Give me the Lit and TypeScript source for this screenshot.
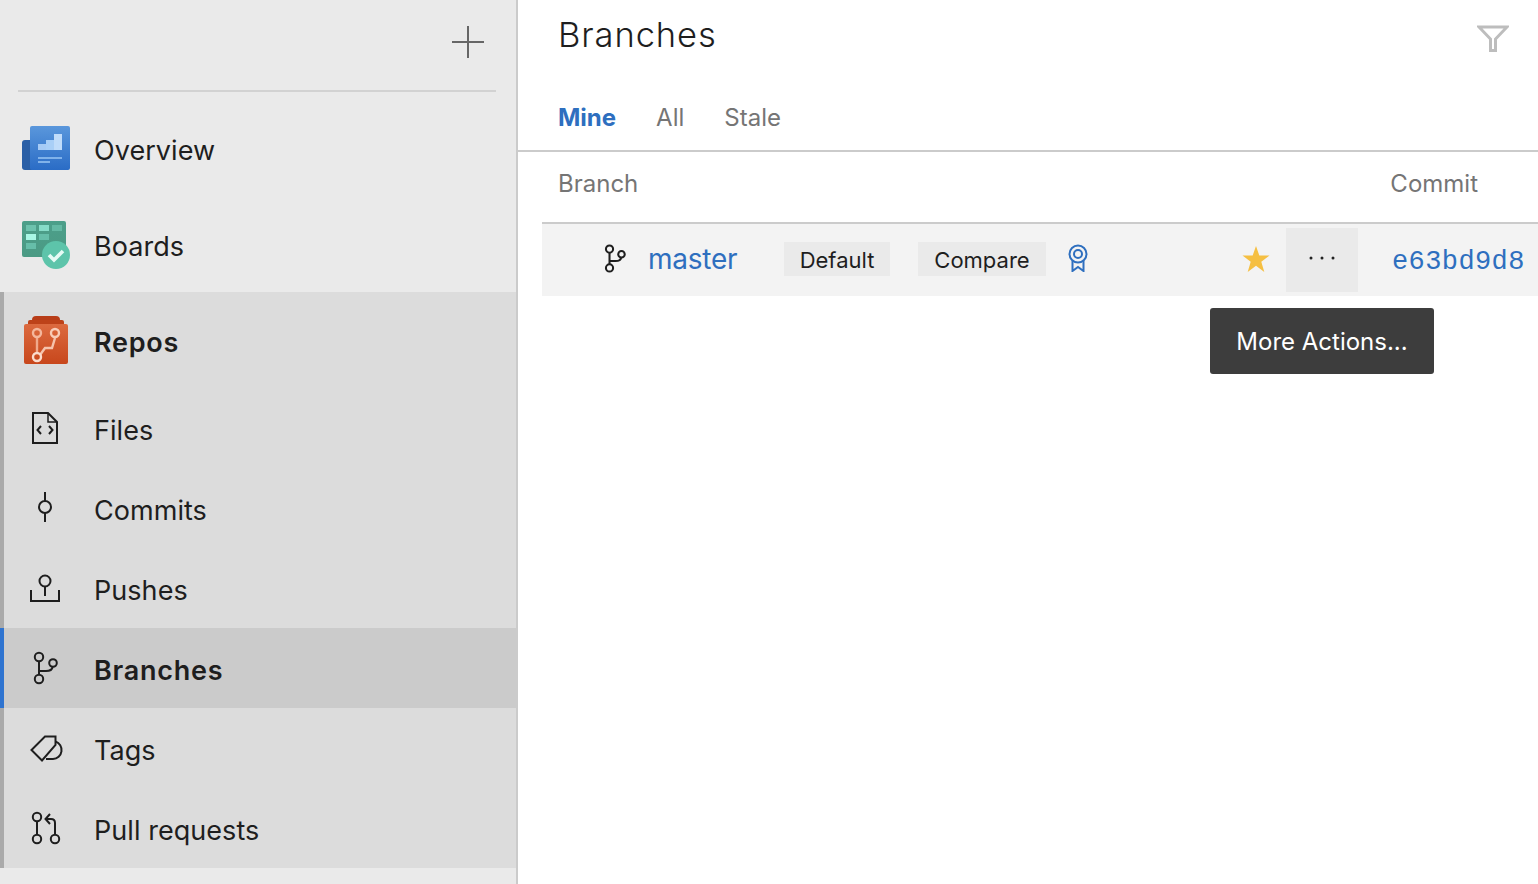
import { LitElement, html, css, svg } from "lit";
import { customElement } from "lit/decorators.js";

const branchIcon = svg`<g fill="none" stroke="currentColor" stroke-width="2"><circle cx="17" cy="13" r="4.2"/><circle cx="17" cy="35" r="4.2"/><circle cx="31" cy="19" r="3.8"/><path d="M17 17.5V30.5M17 27H24Q30 27 30.6 23"/></g>`;

const icons: Record<string, unknown> = {
  overview: html`<svg viewBox="0 0 48 48" width="48" height="48">
    <defs><linearGradient id="o" x1="0" y1="0" x2="0" y2="1"><stop offset="0" stop-color="#5a97dc"/><stop offset="1" stop-color="#2a6cc6"/></linearGradient></defs>
    <rect x="0" y="14" width="14" height="30" rx="3" fill="#2a5fa6"/>
    <rect x="8" y="0" width="40" height="44" rx="2" fill="url(#o)"/>
    <rect x="16" y="18" width="8" height="6" fill="#a6cbf5"/><rect x="24" y="14" width="8" height="10" fill="#a9cff7"/><rect x="32" y="8" width="8" height="16" fill="#c0dcfa"/>
    <rect x="16" y="31" width="24" height="2" fill="#80b2ea"/><rect x="16" y="35" width="12" height="2" fill="#80b2ea"/>
  </svg>`,
  boards: html`<svg viewBox="0 0 48 48" width="48" height="48">
    <defs><linearGradient id="b" x1="0" y1="0" x2="0" y2="1"><stop offset="0" stop-color="#4c9f8a"/><stop offset="1" stop-color="#4b9a84"/></linearGradient></defs>
    <rect x="0" y="0" width="44" height="36" rx="2" fill="url(#b)"/>
    <rect x="4" y="4" width="10" height="6" fill="#6cc2ad"/><rect x="17" y="4" width="10" height="6" fill="#86dcc8"/><rect x="30" y="4" width="10" height="6" fill="#64b9a4"/>
    <rect x="4" y="13" width="10" height="6" fill="#a9f7e5"/><rect x="17" y="13" width="10" height="6" fill="#66bea9"/>
    <rect x="4" y="22" width="10" height="6" fill="#66bea9"/>
    <circle cx="34" cy="34" r="14" fill="#5dc4aa"/>
    <path d="M27 34L32 39L41 30" fill="none" stroke="#e6fbf5" stroke-width="3.6"/>
  </svg>`,
  repos: html`<svg viewBox="0 0 48 48" width="48" height="48">
    <defs><linearGradient id="r" x1="0" y1="0" x2="0" y2="1"><stop offset="0" stop-color="#dc6a3f"/><stop offset="1" stop-color="#c8471c"/></linearGradient></defs>
    <path d="M8 4Q8 0 12 0H32Q36 0 36 4H8Z" fill="#b83d18"/><rect x="4" y="4" width="36" height="6" rx="2" fill="#bd4219"/>
    <rect x="0" y="8" width="44" height="40" rx="2" fill="url(#r)"/>
    <g fill="none" stroke-width="2.4">
      <path d="M13 21V37" stroke="#f0a98c"/><path d="M16 39L21 32H28L31 22" stroke="#f6c3ac"/>
      <circle cx="13" cy="17" r="4" stroke="#f4b79c"/><circle cx="31" cy="17" r="4" stroke="#f8cdb8"/><circle cx="13" cy="41" r="4" stroke="#fbdccd"/>
    </g>
  </svg>`,
  files: html`<svg viewBox="0 0 48 48" width="48" height="48" fill="none" stroke="currentColor" stroke-width="2">
    <path d="M11 9H26L35 18V39H11Z"/><path d="M26 9V18H35" stroke-width="1.5"/><path d="M19 22L15.5 26L19 30M27 22L30.500 26L27 30"/>
  </svg>`,
  commits: html`<svg viewBox="0 0 48 48" width="48" height="48" fill="none" stroke="currentColor" stroke-width="2">
    <circle cx="23" cy="23" r="6"/><path d="M23 8V17M23 29V38"/>
  </svg>`,
  pushes: html`<svg viewBox="0 0 48 48" width="48" height="48" fill="none" stroke="currentColor" stroke-width="2">
    <circle cx="23" cy="17" r="5.500"/><path d="M23 23V32M9 26V37H37V26"/>
  </svg>`,
  branches: html`<svg viewBox="0 0 48 48" width="48" height="48">${branchIcon}</svg>`,
  tags: html`<svg viewBox="0 0 48 48" width="48" height="48" fill="none" stroke="currentColor" stroke-width="2">
    <path d="M9.500 26L23 12.500H33.500V21L20 36.500Z"/><path d="M33.500 17.500A9 9 0 0 1 31 35H24"/>
  </svg>`,
  pulls: html`<svg viewBox="0 0 48 48" width="48" height="48" fill="none" stroke="currentColor" stroke-width="2">
    <circle cx="15" cy="13" r="4.200"/><circle cx="15" cy="35" r="4.200"/><circle cx="33" cy="35" r="4.200"/>
    <path d="M15 17.500V30.500M33 30.500V19Q33 15 29 15H24M28 10L23.500 15L28 20"/>
  </svg>`,
};

@customElement("app-root")
export class AppRoot extends LitElement {
  static styles = css`
    :host { display: flex; width: 1538px; height: 884px; overflow: hidden; background: #fff; color: #1e1e1e; font-family: Inter, "Liberation Sans", sans-serif; }
    .side { width: 516px; height: 884px; flex: none; background: #eaeaea; border-right: 2px solid #cbcbcb; }
    .top { margin: 0 20px 10px 18px; border-bottom: 2px solid #d2d2d2; display: flex; justify-content: flex-end; align-items: flex-start; padding: 26px 12px 0 0; box-sizing: border-box; height: 92px; }
    .top svg { display: block; }
    .item { display: flex; align-items: center; padding-left: 22px; font-size: 27px; letter-spacing: 0.05px; }
    .item svg { display: block; flex: none; margin-right: 24px; }
    .tall { height: 96px; }
    .boards { height: 94px; }
    .boards span { padding-top: 2px; }
    .sub { height: 80px; }
    .sub span { padding-top: 4px; }
    .repos span { padding-top: 4px; }
    .repos.item svg { margin-right: 22px; }
    .group { background: #dcdcdc; border-left: 4px solid #aaa; }
    .group .item { padding-left: 18px; }
    .group .repos.item { padding-left: 20px; }
    .group .strong { font-weight: 600; letter-spacing: 0.75px; }
    .active { background: #cbcbcb; margin-left: -4px; border-left: 4px solid #2f74d0; }
    .main { flex: 1; min-width: 0; position: relative; }
    h1 { margin: 0; height: 72px; padding: 14px 40px 0; box-sizing: border-box; font-size: 34.500px; line-height: 42px; font-weight: 300; letter-spacing: 0.9px; display: flex; justify-content: space-between; }
    .filter { margin: 11px -11px 0 0; display: block; }
    .tabs { display: flex; gap: 40px; height: 80px; padding: 30px 40px 0; box-sizing: border-box; border-bottom: 2px solid #cbcbcb; font-size: 24px; color: #757575; line-height: 32px; }
    .tabs .on { color: #2e6fbf; font-weight: 700; }
    .heads { height: 72px; margin-left: 24px; border-bottom: 2px solid #cbcbcb; box-sizing: border-box; display: flex; justify-content: space-between; font-size: 24px; color: #757575; line-height: 32px; padding: 16px 60px 0 16px; }
    .row { height: 72px; margin-left: 24px; background: #f3f3f3; display: flex; align-items: center; }
    .row .bicon { margin: 0 0 3px 52.500px; color: #1e1e1e; display: block; flex: none; }
    .bicon g { stroke-width: 2.400px; }
    .name { color: #2e6fbf; font-size: 28px; margin-left: 12.500px; width: 136px; flex: none; padding-bottom: 2px; letter-spacing: -0.25px; }
    .tag { background: #eaeaea; height: 34px; display: flex; align-items: center; justify-content: center; font-size: 22px; flex: none; padding-top: 2px; box-sizing: border-box; margin-bottom: 2px; }
    .t1 { width: 106px; margin-right: 28px; }
    .t2 { width: 128px; }
    .ribbon { margin: 0 0 4px 22px; display: block; flex: none; }
    .star { margin: 0 0 2px 154px; display: block; flex: none; }
    .more { width: 72px; height: 64px; margin-left: 16px; background: #eaeaea; display: flex; align-items: center; justify-content: center; flex: none; padding-bottom: 4px; box-sizing: border-box; }
    .sha { margin-left: 34px; padding-top: 4px; color: #2e6fbf; font-family: "Liberation Mono", monospace; font-size: 27px; letter-spacing: 0.4px; }
    .tip { position: absolute; left: 692px; top: 308px; width: 224px; height: 66px; background: #3d3d3d; color: #fff; border-radius: 3px; display: flex; align-items: center; justify-content: center; font-size: 24px; }
  `;

  item(icon: string, label: string, cls: string, strong = false) {
    return html`<div class="item ${cls}">${icons[icon]}<span class=${strong ? "strong" : ""}>${label}</span></div>`;
  }

  render() {
    return html`
      <nav class="side">
        <div class="top">
          <svg width="32" height="32" viewBox="0 0 32 32"><path d="M16 0V32M0 16H32" stroke="#666" stroke-width="2"/></svg>
        </div>
        ${this.item("overview", "Overview", "tall")}
        ${this.item("boards", "Boards", "boards")}
        <div class="group">
          ${this.item("repos", "Repos", "tall repos", true)}
          ${this.item("files", "Files", "sub")}
          ${this.item("commits", "Commits", "sub")}
          ${this.item("pushes", "Pushes", "sub")}
          ${this.item("branches", "Branches", "sub active", true)}
          ${this.item("tags", "Tags", "sub")}
          ${this.item("pulls", "Pull requests", "sub")}
        </div>
      </nav>
      <main class="main">
        <h1>Branches
          <svg class="filter" width="32" height="30" viewBox="0 0 32 30" fill="none"><path d="M2 2H30L18.500 14V25.500H13.500V14Z" stroke="#bdbdbd" stroke-width="3"/></svg>
        </h1>
        <div class="tabs"><span class="on">Mine</span><span>All</span><span>Stale</span></div>
        <div class="heads"><span>Branch</span><span>Commit</span></div>
        <div class="row">
          <svg class="bicon" viewBox="0 0 48 48" width="41" height="41">${branchIcon}</svg>
          <span class="name">master</span>
          <span class="tag t1">Default</span>
          <span class="tag t2">Compare</span>
          <svg class="ribbon" width="20" height="28" viewBox="0 0 20 28" fill="none" stroke="#2e6fbf" stroke-width="2"><circle cx="10" cy="10" r="8.500"/><circle cx="10" cy="10" r="4"/><path d="M4.500 17V27L10 23L15.500 27V17"/></svg>
          <svg class="star" width="28" height="28" viewBox="0 0 28 28"><path d="M14 1L17.300 10.500H27.500L19.300 16.700L22.300 27L14 20.800L5.700 27L8.700 16.700L0.500 10.500H10.700Z" fill="#f5bf42"/></svg>
          <div class="more"><svg width="26" height="4" viewBox="0 0 26 4"><circle cx="2" cy="2" r="1.500" fill="#222"/><circle cx="13" cy="2" r="1.500" fill="#222"/><circle cx="24" cy="2" r="1.500" fill="#222"/></svg></div>
          <span class="sha">e63bd9d8</span>
        </div>
        <div class="tip">More Actions...</div>
      </main>
    `;
  }
}
